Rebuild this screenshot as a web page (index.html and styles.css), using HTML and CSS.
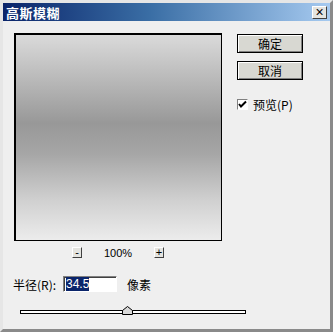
FILE: index.html
```html
<!DOCTYPE html>
<html lang="zh-CN">
<head>
    <meta charset="UTF-8">
    <title>高斯模糊</title>
    <link rel="stylesheet" href="styles.css">
</head>
<body>

    <div class="window">
        <div class="titlebar">
            <span class="title">高斯模糊</span>
            <span class="close">×</span>
        </div>

        <div class="content">
            <div class="left-col">
                <div class="preview"></div>
                <div class="zoom-row">
                    <span class="tiny-btn">-</span>
                    <span class="zoom-value">100%</span>
                    <span class="tiny-btn">+</span>
                </div>
            </div>

            <div class="right-col">
                <div class="btn btn-default">确定</div>
                <div class="btn">取消</div>
                <label class="check-row">
                    <span class="checkbox">
                        <svg width="9" height="9" viewBox="0 0 9 9">
                            <path d="M1 4 L3 6.5 L8 1.5" fill="none" stroke="#000" stroke-width="2"/>
                        </svg>
                    </span>
                    预览(P)
                </label>
            </div>
        </div>

        <div class="radius-row">
            <span class="label">半径(R):</span>
            <span class="input"><span class="selected">34.5</span></span>
            <span class="unit">像素</span>
        </div>

        <div class="slider">
            <div class="track"></div>
            <svg class="thumb" width="11" height="9" viewBox="0 0 11 9">
                <path d="M0.5 8.5 L0.5 4.5 L5.5 0.5 L10.5 4.5 L10.5 8.5 Z" fill="#d8d8d8" stroke="#000"/>
            </svg>
        </div>
    </div>

</body>
</html>
```

FILE: styles.css
```css
body {
    margin: 0;
    font-family: "Noto Sans CJK SC", "Liberation Sans", sans-serif;
    font-size: 12px;
    color: #000;
}
.window {
    width: 333px;
    height: 332px;
    box-sizing: border-box;
    background: #efefef;
    border: 3px solid #e6e6e6;
    border-right-color: #8a8a8a;
    border-bottom-color: #8a8a8a;
}
.titlebar {
    height: 18px;
    background: linear-gradient(to right, #0a246a 0%, #3a6ea5 45%, #a6caf0 100%);
    display: flex;
    align-items: center;
    justify-content: space-between;
    padding: 0 3px 0 3px;
}
.title {
    color: #fff;
    font-weight: bold;
    font-size: 13px;
    letter-spacing: 0.5px;
}
.close {
    width: 15px;
    height: 13px;
    box-sizing: border-box;
    background: #e4e4e0;
    border: 1px solid #404040;
    border-top-color: #fff;
    border-left-color: #fff;
    font-family: "Liberation Sans", sans-serif;
    font-size: 14px;
    line-height: 10px;
    text-align: center;
}
.content {
    display: flex;
    padding: 12px 0 0 11px;
}
.preview {
    width: 208px;
    height: 208px;
    box-sizing: border-box;
    border: 1px solid #000;
    border-top-width: 2px;
    border-left-width: 2px;
    background: linear-gradient(to bottom, #dadada 0%, #b4b4b4 25%, #989898 43%, #a6a6a6 58%, #cfcfcf 80%, #ececec 100%);
}
.zoom-row {
    display: flex;
    justify-content: center;
    align-items: center;
    gap: 21px;
    margin-top: 6px;
    height: 11px;
}
.tiny-btn {
    width: 10px;
    height: 11px;
    box-sizing: border-box;
    border: 1px solid #404040;
    border-top-color: #fff;
    border-left-color: #fff;
    background: #e4e4e0;
    font-family: "Liberation Sans", sans-serif;
    font-size: 11px;
    line-height: 8px;
    text-align: center;
}
.zoom-value {
    font-family: "Liberation Sans", sans-serif;
    font-size: 11px;
    width: 30px;
    text-align: center;
}
.right-col {
    margin-left: 15px;
    display: flex;
    flex-direction: column;
    gap: 8px;
    padding-top: 1px;
}
.btn {
    width: 66px;
    height: 19px;
    box-sizing: border-box;
    border: 1px solid #000;
    background: #d8d8d2;
    box-shadow: inset 1px 1px #fff, inset -1px -1px #808080;
    text-align: center;
    font-size: 12px;
    line-height: 17px;
}
.check-row {
    display: flex;
    align-items: center;
    gap: 5px;
    margin-top: 8px;
    font-size: 12px;
}
.checkbox {
    width: 11px;
    height: 11px;
    box-sizing: border-box;
    border: 1px solid #808080;
    border-right-color: #fff;
    border-bottom-color: #fff;
    background: #fff;
    display: flex;
    align-items: center;
    justify-content: center;
}
.radius-row {
    display: flex;
    align-items: center;
    margin: 18px 0 0 10px;
    height: 16px;
}
.label {
    width: 50px;
}
.input {
    width: 54px;
    height: 16px;
    box-sizing: border-box;
    border: 1px solid #808080;
    border-right-color: #fff;
    border-bottom-color: #fff;
    background: #fff;
    box-shadow: inset 1px 1px #404040;
    padding: 1px 0 0 2px;
    font-family: "Liberation Sans", sans-serif;
    font-size: 12px;
    line-height: 13px;
}
.selected {
    background: #0a246a;
    color: #fff;
}
.unit {
    margin-left: 10px;
}
.slider {
    position: relative;
    margin: 14px 0 0 17px;
    width: 226px;
    height: 9px;
}
.track {
    position: absolute;
    left: 0;
    right: 0;
    top: 4px;
    height: 4px;
    box-sizing: border-box;
    border: 1px solid #000;
    background: #fff;
}
.thumb {
    position: absolute;
    left: 102px;
    top: 0;
}
```
